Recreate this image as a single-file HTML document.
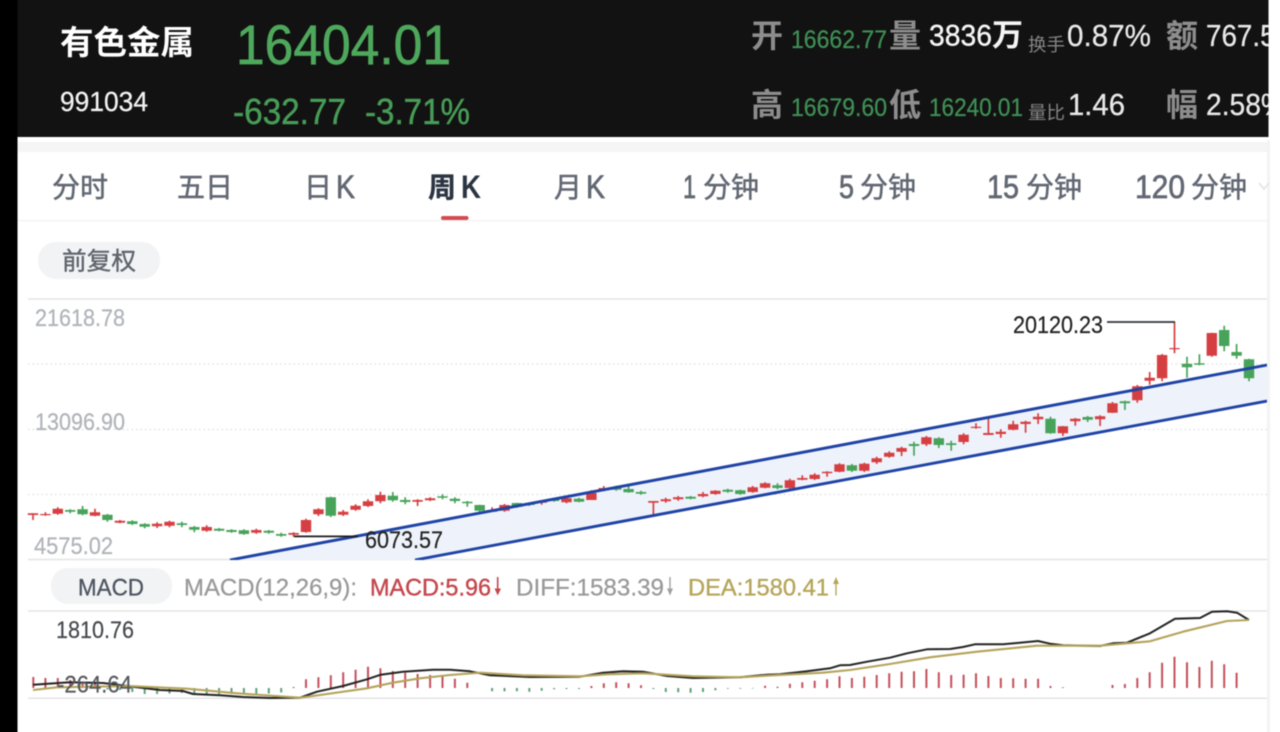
<!DOCTYPE html>
<html lang="zh">
<head>
<meta charset="utf-8">
<title>有色金属</title>
<style>
html,body{margin:0;padding:0;background:#fff;width:1280px;height:732px;overflow:hidden}
body{position:relative}
svg{display:block;position:absolute;left:-10px;top:-10px;filter:blur(.45px)}
text{font-family:"Liberation Sans","Noto Sans CJK SC",sans-serif}
.cjk{font-family:"Noto Sans CJK SC","Liberation Sans",sans-serif}
</style>
</head>
<body>
<svg width="1300" height="752" viewBox="-10 -10 1300 752" xmlns="http://www.w3.org/2000/svg">
<defs><clipPath id="hc"><rect x="17" y="-10" width="1252" height="147"/></clipPath><clipPath id="cc"><rect x="17" y="299" width="1250" height="261"/></clipPath></defs>
<rect x="-10" y="-10" width="1300" height="752" fill="#fff"/>
<rect x="17" y="142" width="1251" height="10" fill="#f5f5f5"/>
<rect x="1267" y="140" width="3" height="602" fill="#f3f3f3"/>
<rect x="-10" y="-10" width="27.5" height="752" fill="#000"/>
<rect x="17.5" y="-10" width="1251" height="147" fill="#121212"/>

<!-- header -->
<g clip-path="url(#hc)">
<text class="cjk" x="60" y="54" font-size="33" font-weight="700" fill="#fff" textLength="134" lengthAdjust="spacingAndGlyphs">有色金属</text>
<text x="60" y="111" font-size="28" fill="#f2f2f2" stroke="#f2f2f2" stroke-width=".3" textLength="88" lengthAdjust="spacingAndGlyphs">991034</text>
<text x="236" y="64" font-size="56" fill="#4ea85c" stroke="#4ea85c" stroke-width=".7" textLength="215" lengthAdjust="spacingAndGlyphs">16404.01</text>
<text x="233" y="124" font-size="36" fill="#479c57" stroke="#479c57" stroke-width=".5" textLength="113" lengthAdjust="spacingAndGlyphs">-632.77</text>
<text x="365" y="124" font-size="36" fill="#479c57" stroke="#479c57" stroke-width=".5" textLength="105" lengthAdjust="spacingAndGlyphs">-3.71%</text>

<text class="cjk" x="751" y="47" font-size="32" font-weight="700" fill="#8d8d8d">开</text>
<text x="791" y="48" font-size="25" fill="#3f8f55" stroke="#3f8f55" stroke-width=".3" textLength="96" lengthAdjust="spacingAndGlyphs">16662.77</text>
<text class="cjk" x="889" y="47" font-size="32" font-weight="700" fill="#8d8d8d">量</text>
<text x="929" y="45.5" font-size="30" fill="#f5f5f5" stroke="#f5f5f5" stroke-width=".4" textLength="63" lengthAdjust="spacingAndGlyphs">3836</text>
<text class="cjk" x="992" y="46" font-size="31" font-weight="700" fill="#f5f5f5">万</text>
<text class="cjk" x="1028" y="51" font-size="18" fill="#858585" textLength="37" lengthAdjust="spacingAndGlyphs">换手</text>
<text x="1067" y="46" font-size="31" fill="#e8e8e8" stroke="#e8e8e8" stroke-width=".3" textLength="84" lengthAdjust="spacingAndGlyphs">0.87%</text>
<text class="cjk" x="1166" y="47" font-size="32" font-weight="700" fill="#8d8d8d">额</text>
<text x="1206" y="46" font-size="31" fill="#e8e8e8" stroke="#e8e8e8" stroke-width=".3" textLength="85" lengthAdjust="spacingAndGlyphs">767.50</text>

<text class="cjk" x="751" y="116" font-size="32" font-weight="700" fill="#8d8d8d">高</text>
<text x="791" y="116" font-size="25" fill="#3f8f55" stroke="#3f8f55" stroke-width=".3" textLength="96" lengthAdjust="spacingAndGlyphs">16679.60</text>
<text class="cjk" x="889" y="116" font-size="32" font-weight="700" fill="#8d8d8d">低</text>
<text x="929" y="116" font-size="25" fill="#3f8f55" stroke="#3f8f55" stroke-width=".3" textLength="94" lengthAdjust="spacingAndGlyphs">16240.01</text>
<text class="cjk" x="1028" y="119" font-size="18" fill="#858585" textLength="37" lengthAdjust="spacingAndGlyphs">量比</text>
<text x="1068" y="115" font-size="31" fill="#e8e8e8" stroke="#e8e8e8" stroke-width=".3" textLength="57" lengthAdjust="spacingAndGlyphs">1.46</text>
<text class="cjk" x="1166" y="116" font-size="32" font-weight="700" fill="#8d8d8d">幅</text>
<text x="1206" y="115" font-size="31" fill="#e8e8e8" stroke="#e8e8e8" stroke-width=".3" textLength="80" lengthAdjust="spacingAndGlyphs">2.58%</text>
</g>

<!-- tabs -->
<g fill="#626873" stroke="#626873" stroke-width=".5" font-size="28">
<text class="cjk" x="52" y="197">分时</text>
<text class="cjk" x="177" y="197">五日</text>
<text class="cjk" x="304" y="197">日</text>
<text class="cjk" x="554" y="197">月</text>
<text class="cjk" x="703" y="197">分钟</text>
<text class="cjk" x="860" y="197">分钟</text>
<text class="cjk" x="1026" y="197">分钟</text>
<text class="cjk" x="1191" y="197">分钟</text>
</g>
<g fill="#626873" stroke="#626873" stroke-width=".7" font-size="32">
<text x="336" y="198" textLength="19" lengthAdjust="spacingAndGlyphs">K</text>
<text x="586" y="198" textLength="19" lengthAdjust="spacingAndGlyphs">K</text>
<text x="683" y="198" textLength="13" lengthAdjust="spacingAndGlyphs">1</text>
<text x="839" y="198" textLength="15" lengthAdjust="spacingAndGlyphs">5</text>
<text x="987" y="198" textLength="32" lengthAdjust="spacingAndGlyphs">15</text>
<text x="1135" y="198" textLength="50" lengthAdjust="spacingAndGlyphs">120</text>
</g>
<text class="cjk" x="428" y="197" font-size="28" font-weight="700" fill="#2b3542" stroke="#2b3542" stroke-width=".3">周</text>
<text x="461" y="198" font-size="32" font-weight="700" fill="#2b3542" textLength="20" lengthAdjust="spacingAndGlyphs">K</text>
<path d="M1259 183l5 6 5-6" fill="none" stroke="#e2e2e2" stroke-width="1.5"/>
<rect x="441" y="216" width="27.5" height="4" rx="2" fill="#d24b50"/>
<rect x="17.5" y="220" width="1250" height="1.4" fill="#f3f3f3"/>

<!-- 前复权 -->
<rect x="38" y="242" width="122" height="37" rx="18" fill="#f2f3f5"/>
<text class="cjk" x="62" y="269.5" font-size="24.5" fill="#60656d" stroke="#60656d" stroke-width=".4" textLength="74" lengthAdjust="spacingAndGlyphs">前复权</text>

<!-- grid -->
<path d="M28 299H1267M28 559.5H1267" stroke="#e4e4e6" stroke-width="1.5" fill="none"/>
<path d="M28 364H1267M28 429.5H1267M28 494.5H1267" stroke="#d6d6d6" stroke-width="1" stroke-dasharray="1.5 3" fill="none"/>

<!-- channel fill -->
<polygon points="230,560 1267,365 1267,401 415,560" fill="#eef3fb"/>

<!-- y labels -->
<g font-size="24.5" fill="#b0b4ba" stroke="#b0b4ba" stroke-width=".25">
<text x="35" y="326" textLength="90" lengthAdjust="spacingAndGlyphs">21618.78</text>
<text x="35" y="430" textLength="90" lengthAdjust="spacingAndGlyphs">13096.90</text>
<text x="34" y="554" textLength="79" lengthAdjust="spacingAndGlyphs">4575.02</text>
</g>

<!-- candles red -->
<path fill="none" stroke="#d63f42" stroke-width="1.7" d="M33 513.3V520M45.4 512.3V515.7M57.8 507.3V514.7M95 508.7V516.3M119.9 520V523.3M157.1 522.3V528M169.5 520.7V527.3M206.7 525.3V531.7M256.3 528.7V533.7M293.6 532.3V536.7M306 518.7V532.7M318.4 508.3V516M343.2 510V516M355.6 504.3V510.7M368 499.3V507M380.4 491.7V503.3M417.6 499.3V506M430.1 497.3V501M492.1 507.3V512M504.5 504V511.7M541.7 500V504.7M566.5 497.7V503.3M591.4 490.3V500M603.8 486V491.3M653.4 501V516.7M665.8 497.7V502.7M678.2 496V500.7M703 492V497.3M715.4 490.3V494.7M752.7 486V492.7M765.1 482.3V488.3M789.9 478.7V488.7M802.3 475.3V480.3M814.7 473.3V480M827.1 471.3V476.7M839.5 463.3V472.3M864.3 462.7V472M876.7 456.7V464M889.2 451.3V457.7M901.6 446.7V456M926.4 436V446M963.6 433.3V444.3M976 423.3V428.7M988.4 417.3V435M1000.8 429.3V437.7M1013.2 420.7V430.3M1025.6 420.7V432.7M1038.1 413.3V424M1062.9 426V436M1075.3 418V425.7M1100.1 415.3V426M1112.5 402V413M1137.3 385V402.7M1149.7 372V384.7M1162.1 354V381.3M1174.5 322V353.3M1211.8 332.7V356.7"/>
<path fill="none" stroke="#d63f42" stroke-width="10.4" d="M33 513.3V515M45.4 514V515.3M57.8 508.7V513.7M95 512.3V515.7M119.9 520.7V522.7M157.1 523.7V526.3M169.5 521.7V525.7M206.7 527V530.7M256.3 530V532.7M293.6 533V534.7M306 520V532M318.4 509.3V514.3M343.2 511.7V514.7M355.6 505.7V509.7M368 501.3V506M380.4 495V501.3M417.6 500V501.7M430.1 498.3V500.3M492.1 510V511.7M504.5 505V510.7M541.7 501V502.7M566.5 498.3V502.3M591.4 493V500M603.8 488V490.3M653.4 501V502.7M665.8 499.3V501.3M678.2 497.3V499.3M703 494V496.3M715.4 490.7V494M752.7 487.3V492M765.1 483.3V487.7M789.9 480.3V488M802.3 478V479.7M814.7 474.7V479M827.1 471.7V473.3M839.5 464.3V471.7M864.3 463.7V470.7M876.7 458.3V462.3M889.2 452.7V456.7M901.6 448V451.7M926.4 437.3V444.3M963.6 434.7V442M976 426.7V428M988.4 433V435M1000.8 431.7V434M1013.2 424.3V429.7M1025.6 421.7V424M1038.1 416.7V419.3M1062.9 426.3V433.3M1075.3 418.7V421.3M1100.1 416.3V419.3M1112.5 403.3V412.7M1137.3 386.3V400.3M1149.7 377.7V380.7M1162.1 355V378.3M1174.5 348V349.3M1211.8 333V355.7"/>
<!-- candles green -->
<path fill="none" stroke="#47a35a" stroke-width="1.7" d="M70.2 509.3V513.3M82.6 506V515.3M107.4 514V521.7M132.3 520.3V525M144.7 523.3V528.3M181.9 521.7V527.3M194.3 526V532.3M219.1 528V531.3M231.5 529.3V532.7M243.9 529.3V534.7M268.8 530V533.7M281.2 532.7V536.7M330.8 496.7V517M392.8 492V501.7M405.2 497.3V504.3M442.5 494.3V499.3M454.9 497.3V503.3M467.3 501V506.7M479.7 504.7V511.7M516.9 502.7V507.7M529.3 502.7V506M554.1 498.3V501.7M579 497.7V502.3M616.2 485.7V490.7M628.6 485.7V492.7M641 490.7V494.7M690.6 496V499.3M727.8 488.7V492.7M740.3 489.7V494.7M777.5 483.3V489.3M851.9 464V472M914 441.7V455.7M938.8 437.3V448M951.2 440.7V450.7M1050.5 416.7V433.7M1087.7 416V422M1124.9 400.7V410M1187 356.7V377.7M1199.4 354.3V365.3M1224.2 325.7V351.3M1236.6 344V358.7M1249 358.7V381.3"/>
<path fill="none" stroke="#47a35a" stroke-width="10.4" d="M70.2 510V511.7M82.6 509.3V514.3M107.4 514.7V520M132.3 521.3V524M144.7 524V526.7M181.9 523.3V525M194.3 527V529.7M219.1 528.7V530.7M231.5 530V532M243.9 530.3V534M268.8 530.7V532.7M281.2 534V535.7M330.8 497.3V515.7M392.8 495.7V500.3M405.2 500V502M442.5 496.3V497.7M454.9 498.7V501M467.3 501.7V503.3M479.7 505V510.7M516.9 503V506.7M529.3 503.3V505M554.1 499V501M579 498.7V501.7M616.2 487V489.7M628.6 489V492.3M641 492V493.7M690.6 496.7V498.7M727.8 489.7V491.7M740.3 490.3V494M777.5 485.3V488M851.9 465.3V470.7M914 444V446M938.8 438.3V445M951.2 443.3V445M1050.5 418.7V433.3M1087.7 417V419.7M1124.9 401.3V403.3M1187 363.7V367.3M1199.4 363.3V364.7M1224.2 330V346M1236.6 352V355.7M1249 359.3V378.3"/>

<!-- channel lines -->
<path clip-path="url(#cc)" d="M230 560L1267 365M415 560L1267 401" stroke="#1f43a6" stroke-width="2.9" fill="none"/>

<!-- annotations -->
<path d="M1107 322H1175" stroke="#2f333a" stroke-width="1.8" fill="none"/>
<path d="M294 536.4H358" stroke="#1c1c1c" stroke-width="1.7" fill="none"/>
<text x="1013" y="333" font-size="24" fill="#222" stroke="#222" stroke-width=".2" textLength="90" lengthAdjust="spacingAndGlyphs">20120.23</text>
<text x="365" y="548" font-size="24" fill="#222" stroke="#222" stroke-width=".2" textLength="78" lengthAdjust="spacingAndGlyphs">6073.57</text>

<!-- MACD header -->
<rect x="51" y="568" width="121" height="36" rx="17" fill="#f2f3f5"/>
<text x="78" y="595.5" font-size="24" fill="#4e5561" stroke="#4e5561" stroke-width=".3" textLength="66" lengthAdjust="spacingAndGlyphs">MACD</text>
<text x="184" y="595.5" font-size="24" fill="#999" stroke="#999" stroke-width=".25" textLength="173" lengthAdjust="spacingAndGlyphs">MACD(12,26,9):</text>
<text x="370" y="595.5" font-size="24" fill="#c5474d" stroke="#c5474d" stroke-width=".4" textLength="121" lengthAdjust="spacingAndGlyphs">MACD:5.96</text>
<path d="M497.7 577V590" stroke="#c5474d" stroke-width="1.6" fill="none"/><path d="M494.5 588.5H501L497.7 595.5Z" fill="#c5474d"/>
<text x="516" y="595.5" font-size="24" fill="#999" stroke="#999" stroke-width=".25" textLength="148" lengthAdjust="spacingAndGlyphs">DIFF:1583.39</text>
<path d="M670 577V590" stroke="#a0a0a0" stroke-width="1.4" fill="none"/><path d="M667 588.5H673L670 595.5Z" fill="#a0a0a0"/>
<text x="688" y="595.5" font-size="24" fill="#b5a55a" stroke="#b5a55a" stroke-width=".35" textLength="141" lengthAdjust="spacingAndGlyphs">DEA:1580.41</text>
<path d="M836 595.5V582" stroke="#b5a55a" stroke-width="1.4" fill="none"/><path d="M833 584H839L836 577Z" fill="#b5a55a"/>

<!-- MACD panel -->
<path d="M28 611H1267M28 698.3H1267" stroke="#e4e4e6" stroke-width="1.5" fill="none"/>
<!-- red bars -->
<path fill="none" stroke="#c4505a" stroke-width="2" d="M33.3 688V677M45.4 688V678M57.8 688V678M70.2 688V680M82.6 688V682M95 688V683M293.6 688V687M306 688V679.3M318.4 688V677.3M330.8 688V675.3M343.2 688V672.3M355.6 688V669.7M368 688V666.7M380.4 688V668.3M392.8 688V671M405.2 688V672.7M417.6 688V674M430.1 688V675M442.5 688V676M454.9 688V678.7M467.3 688V682.7M591.4 688V686M603.8 688V683.3M616.2 688V682.3M628.6 688V683.3M641 688V685.3M765.1 688V685.7M777.5 688V686.7M789.9 688V683.7M802.3 688V682.3M814.7 688V680.7M827.1 688V679.3M839.5 688V676.3M851.9 688V678M864.3 688V676.7M876.7 688V675M889.2 688V673.3M901.6 688V671.7M914 688V671.3M926.4 688V669M938.8 688V672.3M951.2 688V675M963.6 688V674.7M976 688V673.3M988.4 688V676M1000.8 688V678M1013.2 688V678.3M1025.6 688V678.7M1038.1 688V678.7M1050.5 688V686M1062.9 688V687.3M1112.5 688V685M1124.9 688V684M1137.3 688V678M1149.7 688V672.3M1162.1 688V662.7M1174.5 688V656.7M1187 688V662.3M1199.4 688V667M1211.8 688V660.7M1224.2 688V664.3M1236.6 688V672.7"/>
<!-- green bars -->
<path fill="none" stroke="#5f9e78" stroke-width="2" d="M107.4 688V689.5M119.9 688V690M132.3 688V692M144.7 688V694M157.1 688V694M169.5 688V693.5M181.9 688V693M194.3 688V693.5M206.7 688V694M219.1 688V694M231.5 688V694M243.9 688V694M256.3 688V694M268.8 688V693.5M281.2 688V692.5M492.1 688V691.3M504.5 688V691.3M516.9 688V691.3M529.3 688V691.7M541.7 688V690.7M554.1 688V689.3M566.5 688V689M579 688V689M653.4 688V689M665.8 688V692M678.2 688V692.3M690.6 688V692.7M703 688V692M715.4 688V690.3M727.8 688V688.7M740.3 688V688.7M752.7 688V688.5"/>
<!-- macd lines -->
<polyline fill="none" stroke="#232323" stroke-width="2" stroke-linejoin="round" points="33,684.7 70,682.3 103,683 133,686.7 160,690 183,691 193,694 220,695.3 243,697 270,698 300,697.7 317,691.7 343,686 367,679.3 380.7,674.7 403,671.7 433,669.7 450,669.7 470,671.3 490,675.3 530,677 580,676.7 603,672.7 623,671.3 643,671.7 667,676 693,678 740,677.3 767,674.7 780,674.3 807,671.3 830,668.3 840,665.3 850,665 867,661.7 890,657.7 907,653.3 927,649.3 950,649 963,647 975,644.3 1003,644.3 1038,641 1050,643.7 1063,645.3 1100,646 1113,643.3 1127,642.7 1150,633.3 1175,618.7 1200,618 1212,611.7 1227,611.3 1237,612.7 1249,620"/>
<polyline fill="none" stroke="#b5a35a" stroke-width="2.1" stroke-linejoin="round" points="33,690 57,687.3 130,686 187,688.7 237,693.3 300,697.7 320,695 367,688.3 393,682.7 420,678.3 450,675 480,672.7 523,675.3 580,676.3 607,674.3 643,673.3 693,676.3 740,677.3 773,675.3 823,672.7 850,670 890,664 930,657.3 977,651.7 1037,645.7 1100,645.7 1150,641.3 1183,631.7 1227,621 1249,620"/>

<text x="56" y="638" font-size="24" fill="#45484e" stroke="#45484e" stroke-width=".2" textLength="78" lengthAdjust="spacingAndGlyphs">1810.76</text>
<text x="57" y="692.5" font-size="24" fill="#55585e" stroke="#55585e" stroke-width=".2" textLength="75" lengthAdjust="spacingAndGlyphs">-264.64</text>
</svg>
</body>
</html>
